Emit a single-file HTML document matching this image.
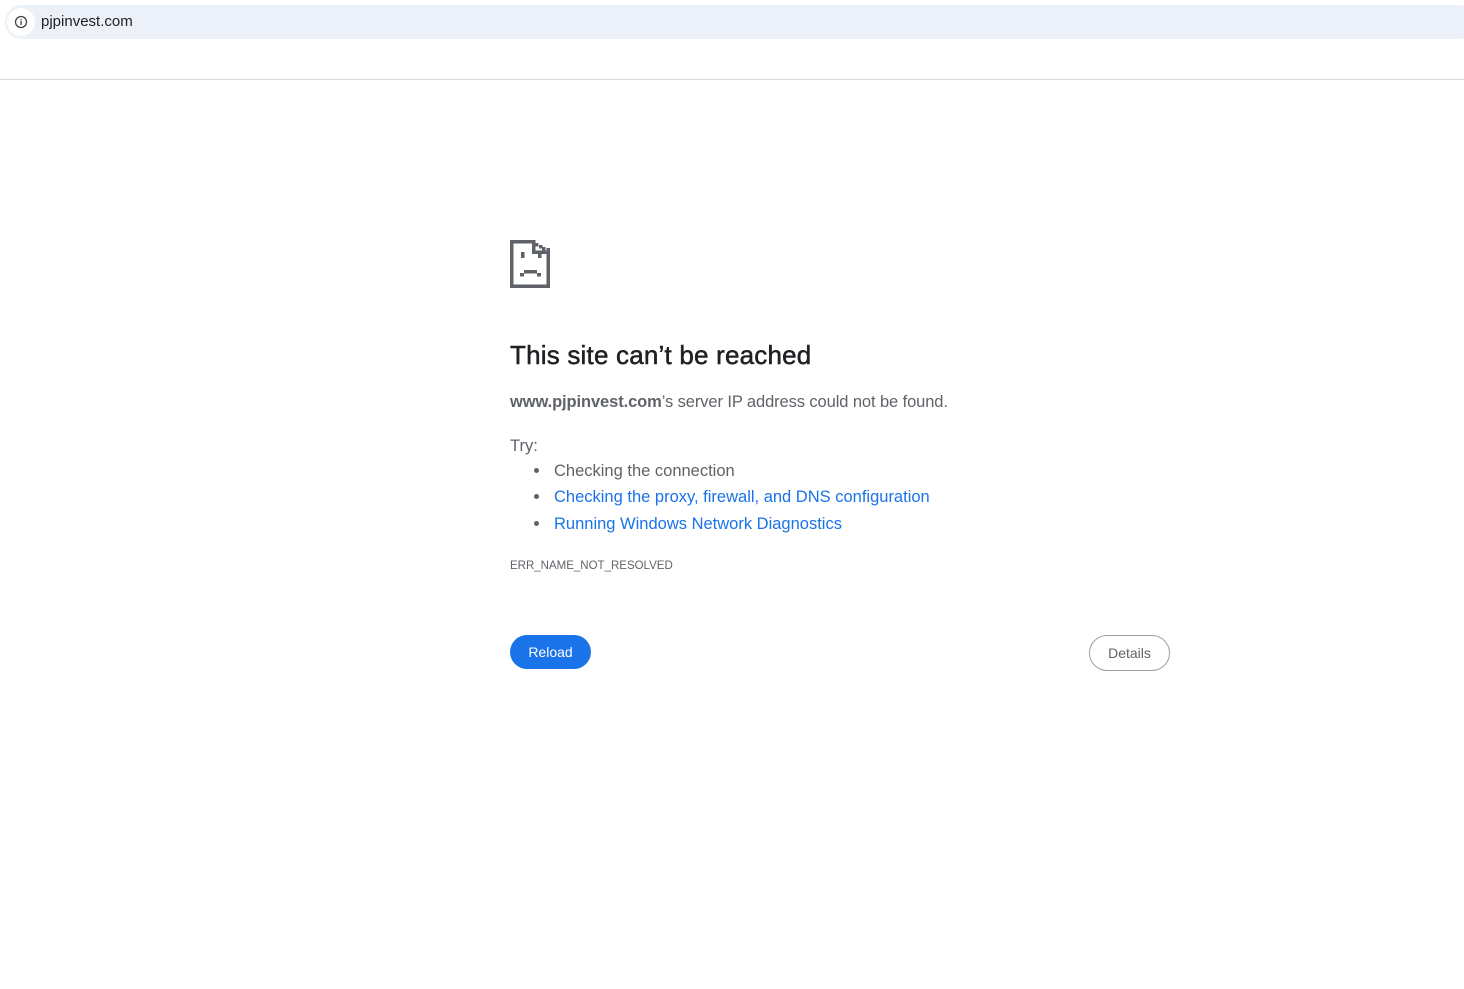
<!DOCTYPE html>
<html><head><meta charset="utf-8"><style>
body{margin:0;width:1464px;height:989px;background:#fff;font-family:"Liberation Sans",sans-serif;position:relative;overflow:hidden}
.bar{position:absolute;left:5px;top:5px;width:1470px;height:34px;background:#ecf0f8;border-radius:17px}
.ic{position:absolute;left:2px;top:3px;width:28px;height:28px;border-radius:14px;background:#fff}
.url{position:absolute;left:41px;top:13px;font-size:15px;color:#1f1f1f}
.line{position:absolute;left:0;top:79px;width:1464px;height:1px;background:#dadada}
.t{position:absolute;left:510px;color:#202124}
h1{position:absolute;left:510px;top:340px;margin:0;font-size:26px;font-weight:normal;color:#202124;-webkit-text-stroke:0.5px #202124;letter-spacing:0.2px}
.s{font-size:16.5px;color:#5f6368}
a{color:#1a73e8;text-decoration:none}
.b{position:absolute;left:534px;width:5px;height:5px;border-radius:50%;background:#5f6368}
</style></head><body>
<div class="bar"><div class="ic"><svg width="28" height="28" viewBox="0 0 28 28"><circle cx="14" cy="14" r="5.5" fill="none" stroke="#444" stroke-width="1.3"/><rect x="13.4" y="13" width="1.3" height="4" fill="#444"/><rect x="13.4" y="11" width="1.3" height="1.2" fill="#444"/></svg></div></div>
<div class="url">pjpinvest.com</div>
<div class="line"></div>
<svg style="position:absolute;left:510px;top:239px" width="42" height="50" viewBox="0 0 42 50" fill="#5f6368">
<rect x="0" y="1" width="3.5" height="48"/><rect x="0" y="45.5" width="40" height="3.5"/><rect x="0" y="1" width="25" height="3.5"/>
<rect x="36.5" y="9" width="3.5" height="40"/><rect x="22" y="1" width="3.5" height="14"/><rect x="22" y="11.5" width="18" height="3.5"/>
<rect x="25" y="4" width="3.5" height="3.5"/><rect x="29" y="6" width="3.5" height="3.5"/><rect x="32" y="8" width="3.5" height="3.5"/>
<rect x="11" y="13" width="3.5" height="6"/><rect x="28" y="14" width="3.5" height="5"/>
<rect x="14" y="31" width="13" height="3.5"/><rect x="10" y="34" width="4" height="3.5"/><rect x="27" y="34" width="4" height="3.5"/>
</svg>
<h1>This site can’t be reached</h1>
<div class="t s" style="top:393px;letter-spacing:-0.1px"><b style="color:#5f6368">www.pjpinvest.com</b>’s server IP address could not be found.</div>
<div class="t s" style="top:437px">Try:</div>
<div class="b" style="top:468px"></div><div class="b" style="top:494px"></div><div class="b" style="top:521px"></div>
<div class="t s" style="left:554px;top:462px">Checking the connection</div>
<div class="t s" style="left:554px;top:488px"><a>Checking the proxy, firewall, and DNS configuration</a></div>
<div class="t s" style="left:554px;top:515px"><a>Running Windows Network Diagnostics</a></div>
<div class="t" style="top:560px;font-size:11.5px;color:#5f6368">ERR_NAME_NOT_RESOLVED</div>
<div style="position:absolute;left:510px;top:635px;width:81px;height:34px;border-radius:17px;background:#1a73e8;color:#fff;font-size:14px;text-align:center;line-height:34px">Reload</div>
<div style="position:absolute;left:1089px;top:635px;width:79px;height:34px;border-radius:18px;border:1px solid #9aa0a6;color:#5f6368;font-size:14px;text-align:center;line-height:34px">Details</div>
</body></html>
